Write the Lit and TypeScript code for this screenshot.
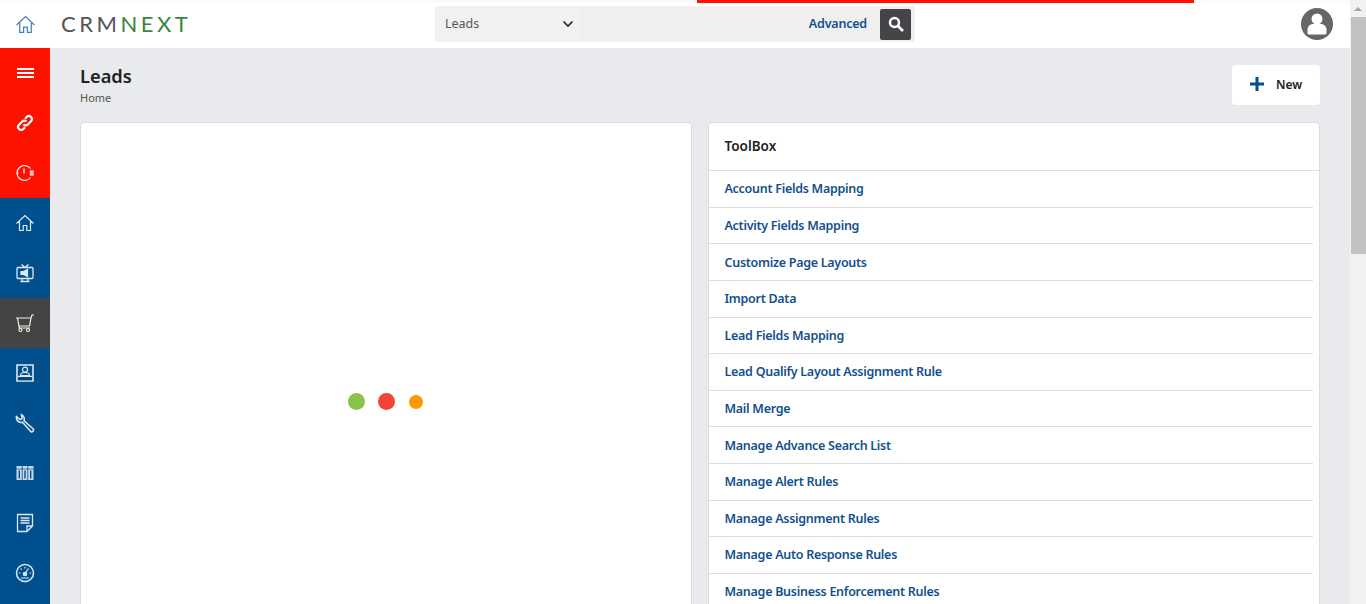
import { LitElement, html, css, svg } from 'lit';
import { customElement } from 'lit/decorators.js';

const ICONS = {
  home: svg`<path d="M1.500 10.500 10 2.500l8.500 8M4.500 8.500v9h3.700v-5h3.600v5h3.700v-9"/>`,
  link: svg`<path d="M8.500 11.500a3 3 0 0 0 4.300 0l3.200-3.200a3 3 0 0 0-4.300-4.300L10 5.700M11.500 8.500a3 3 0 0 0-4.300 0L4 11.700A3 3 0 0 0 8.300 16L10 14.300" stroke-width="2.100"/>`,
  clock: svg`<path d="M15.500 5.500A7.500 7.500 0 1 0 15.500 14.500M9 5.500v5M2.500 10h1"/><path d="M15 7.500h3.500v5H15z" fill="currentColor" stroke-width="0.500" opacity="0.700"/>`,
  tv: svg`<path d="M6.500 1.500l3.500 3 3.500-3M3 4.500h14a1 1 0 0 1 1 1v9a1 1 0 0 1-1 1H3a1 1 0 0 1-1-1v-9a1 1 0 0 1 1-1zM5.500 18.500h9" stroke-width="1.300"/><path d="M6 8.500h2.500l4-2v7l-4-2H6z" fill="currentColor"/><path d="M7 15.500v3M13 15.500v3"/>`,
  cart: svg`<path d="M1 5h14.500M2.500 5l1.500 8h10.500l1.500-8 1-3h2M4.500 13l-.5 2h11"/><circle cx="5.500" cy="17" r="1.500"/><circle cx="13" cy="17" r="1.500"/>`,
  contact: svg`<path d="M2 2h16v16H2z" stroke-width="1.600"/><circle cx="10" cy="6.700" r="2.500"/><path d="M5.500 12.500c0-2 2-3 4.500-3s4.500 1 4.500 3z"/><path d="M3 13.500h14" stroke-width="1.400"/><path d="M3 14.200h14v3H3z" fill="#0b3f78" stroke="none"/>`,
  wrench: svg`<path d="M1.500 3.500 5 6.500l2.200-1L6.500 1.800a4.800 4.800 0 0 1 2.500 6l9 8a1.700 1.700 0 0 1-2.500 2.500l-8-9a4.800 4.800 0 0 1-6-5.800z" stroke-width="1.500"/>`,
  columns: svg`<path d="M1.500 3h17v14h-17z" fill="#c5dcf0" stroke="none"/><path d="M7.200 3v14M12.800 3v14" stroke="#024f8e" stroke-width="0.800"/><path d="M1.500 6h17" stroke="#024f8e" stroke-width="0.700"/><path d="M4.300 7.500v8M10 7.500v8M15.700 7.500v8" stroke="#0b3f78" stroke-width="1.300"/>`,
  note: svg`<path d="M17.500 13V1.500h-15v17H12zM17.500 13H12v5.500M5.500 5h9M5.500 7.500h9M5.500 10h9" stroke-width="1.300"/>`,
  gauge: svg`<circle cx="10" cy="10" r="8.500" stroke-width="1.500"/><path d="M10 10.500l3.500-5M6 15h8M3.800 10h1.700M14.500 10h1.700M10 4v1.500M5.600 5.600l1.100 1.100"/><circle cx="10" cy="11" r="1.700" fill="currentColor"/>`,
};

type IconName = keyof typeof ICONS;

const TOOLS = [
  'Account Fields Mapping',
  'Activity Fields Mapping',
  'Customize Page Layouts',
  'Import Data',
  'Lead Fields Mapping',
  'Lead Qualify Layout Assignment Rule',
  'Mail Merge',
  'Manage Advance Search List',
  'Manage Alert Rules',
  'Manage Assignment Rules',
  'Manage Auto Response Rules',
  'Manage Business Enforcement Rules',
];

const NAV: { icon: IconName; tone: string }[] = [
  { icon: 'link', tone: 'red' },
  { icon: 'clock', tone: 'red' },
  { icon: 'home', tone: 'blue' },
  { icon: 'tv', tone: 'blue' },
  { icon: 'cart', tone: 'dark' },
  { icon: 'contact', tone: 'blue' },
  { icon: 'wrench', tone: 'blue' },
  { icon: 'columns', tone: 'blue' },
  { icon: 'note', tone: 'blue' },
  { icon: 'gauge', tone: 'blue' },
];

@customElement('app-root')
export class AppRoot extends LitElement {
  static styles = css`
    :host {
      display: flex;
      width: 1366px;
      height: 604px;
      overflow: hidden;
      font-family: "Noto Sans", "Open Sans", sans-serif;
      background: #e8eaed;
    }
    .page {
      width: 1350px;
      display: flex;
      flex-direction: column;
      position: relative;
    }
    .topline {
      position: absolute;
      left: 0;
      right: 0;
      top: 0;
      height: 3px;
      background: #fafafa;
    }
    .progress {
      position: absolute;
      left: 697px;
      top: 0;
      width: 497px;
      height: 3px;
      background: #ff1100;
    }
    header {
      height: 48px;
      background: #fff;
      display: flex;
      align-items: center;
      flex: none;
    }
    .home-btn {
      width: 50px;
      display: flex;
      justify-content: center;
      color: #4a7fb5;
    }
    .home-btn svg {
      width: 21px;
      height: 21px;
      fill: none;
      stroke: currentColor;
      stroke-width: 1.200;
    }
    .logo {
      margin-left: 11px;
      width: 374px;
      font-family: "Lato", sans-serif;
      font-size: 22px;
      letter-spacing: 3.500px;
      color: #555;
      padding-bottom: 1px;
    }
    .logo span {
      color: #3d8542;
    }
    .search {
      width: 480px;
      height: 36px;
      border-radius: 4px;
      background: #efefef;
      display: flex;
      align-items: center;
    }
    .select {
      width: 146px;
      height: 33px;
      padding: 0 7px 1px 10px;
      box-sizing: border-box;
      background: #f1f1f1;
      border-radius: 4px;
      display: flex;
      align-items: center;
      justify-content: space-between;
      font-size: 12.500px;
      color: #555;
    }
    .select svg {
      width: 12px;
      height: 8px;
      fill: none;
      stroke: #222;
      stroke-width: 1.600;
    }
    .adv {
      margin-left: auto;
      margin-right: 13px;
      padding-bottom: 1px;
      font-size: 12.500px;
      font-weight: 600;
      letter-spacing: -0.200px;
      color: #14508e;
    }
    .go {
      width: 31px;
      height: 31px;
      margin-right: 4px;
      border-radius: 2px;
      background: #444449;
      display: flex;
      align-items: center;
      justify-content: center;
    }
    .go svg {
      width: 16px;
      height: 16px;
      fill: none;
      stroke: #fff;
      stroke-width: 2.500;
    }
    .avatar {
      margin-left: auto;
      margin-right: 17px;
      width: 32px;
      height: 32px;
    }
    .below {
      flex: 1;
      min-height: 0;
      display: flex;
    }
    nav {
      width: 50px;
      flex: none;
      display: flex;
      flex-direction: column;
      background: #024f8e;
    }
    .nav-item {
      height: 50px;
      flex: none;
      display: flex;
      align-items: center;
      justify-content: center;
      color: #fff;
    }
    .nav-item svg {
      width: 20px;
      height: 20px;
      fill: none;
      stroke: currentColor;
      stroke-width: 1.200;
    }
    .red { background: #ff1100; }
    .blue { background: #024f8e; color: #dce9f5; }
    .dark { background: #444444; color: #f2ede4; }
    .burger {
      display: flex;
      flex-direction: column;
      gap: 2px;
    }
    .burger i {
      display: block;
      width: 17px;
      height: 2px;
      background: #fff;
    }
    main {
      flex: 1;
      min-width: 0;
      padding: 17px 30px 0;
    }
    .head {
      display: flex;
      justify-content: space-between;
      align-items: flex-start;
      height: 58px;
      margin-bottom: -1px;
    }
    h1 {
      margin: -1px 0 0;
      font-size: 18.300px;
      line-height: 24px;
      font-weight: 600;
      color: #222;
    }
    .crumb {
      font-size: 11px;
      line-height: 20px;
      color: #555;
    }
    .new {
      width: 88px;
      height: 40px;
      padding-bottom: 2px;
      box-sizing: border-box;
      background: #fff;
      border-radius: 4px;
      display: flex;
      align-items: center;
      font-size: 12px;
      font-weight: 600;
      color: #222;
    }
    .new svg {
      width: 14px;
      height: 14px;
      margin-left: 18px;
      margin-right: 12px;
      fill: #024f8e;
    }
    .cols {
      display: grid;
      grid-template-columns: 612px 612px;
      gap: 16px;
    }
    .card {
      height: 520px;
      background: #fff;
      border: 1px solid #dcdcdc;
      border-radius: 4px;
      box-sizing: border-box;
    }
    .loader {
      display: grid;
      grid-template-columns: repeat(3, 30px);
      justify-content: center;
      justify-items: center;
      align-items: center;
      padding-top: 270px;
    }
    .dot { border-radius: 50%; }
    .d1 { width: 17px; height: 17px; background: #8bc34a; }
    .d2 { width: 17px; height: 17px; background: #f44336; }
    .d3 { width: 14px; height: 14px; background: #ff9800; }
    .tool-head {
      height: 48.200px;
      padding: 0 0 2px 15.500px;
      display: flex;
      align-items: center;
      font-size: 13.500px;
      font-weight: 600;
      color: #222;
      border-bottom: 1px solid #dedede;
      box-sizing: border-box;
    }
    .tool-row {
      height: 36.600px;
      margin-right: 6px;
      padding-left: 15.500px;
      display: flex;
      align-items: center;
      box-sizing: border-box;
      border-bottom: 1px solid #dedede;
      font-size: 12.500px;
      letter-spacing: -0.280px;
      font-weight: 600;
      color: #14508e;
    }
    .scrollbar {
      width: 16px;
      flex: none;
      background: #f1f1f1;
      display: flex;
      flex-direction: column;
      align-items: center;
    }
    .arrow {
      height: 17px;
      display: flex;
      align-items: center;
    }
    .arrow svg {
      width: 8px;
      height: 4px;
      fill: #a3a3a3;
    }
    .thumb {
      width: 15px;
      margin-left: 1px;
      height: 237px;
      background: #c1c1c1;
    }
  `;

  private icon(name: IconName) {
    return html`<svg viewBox="0 0 20 20">${ICONS[name]}</svg>`;
  }

  render() {
    return html`
      <div class="page">
        <header>
          <div class="home-btn">${this.icon('home')}</div>
          <div class="logo">CRM<span>NEXT</span></div>
          <div class="search">
            <div class="select">
              Leads
              <svg viewBox="0 0 12 8"><path d="M1.500 1.500 6 6l4.500-4.500" /></svg>
            </div>
            <div class="adv">Advanced</div>
            <div class="go">
              <svg viewBox="0 0 16 16"><circle cx="6.500" cy="6.500" r="4.500" /><path d="m10 10 5 5" /></svg>
            </div>
          </div>
          <svg class="avatar" viewBox="0 0 32 32">
            <circle cx="16" cy="16" r="16" fill="#666" />
            <circle cx="16" cy="11" r="5.500" fill="#fff" />
            <path d="M6.500 25v-3c0-4 3-6 5.500-6h8c2.500 0 5.500 2 5.500 6v3c0 1-1 1.500-2 1.500H8.500c-1 0-2-.5-2-1.500z" fill="#fff" />
          </svg>
        </header>
        <div class="topline"></div>
        <div class="progress"></div>
        <div class="below">
          <nav>
            <div class="nav-item red">
              <div class="burger"><i></i><i></i><i></i></div>
            </div>
            ${NAV.map(
              (n) => html`<div class="nav-item ${n.tone}">${this.icon(n.icon)}</div>`,
            )}
          </nav>
          <main>
            <div class="head">
              <div>
                <h1>Leads</h1>
                <div class="crumb">Home</div>
              </div>
              <div class="new">
                <svg viewBox="0 0 14 14"><path d="M5.500 0h3v5.500H14v3H8.500V14h-3V8.500H0v-3h5.500z" /></svg>
                New
              </div>
            </div>
            <div class="cols">
              <div class="card">
                <div class="loader">
                  <div class="dot d1"></div>
                  <div class="dot d2"></div>
                  <div class="dot d3"></div>
                </div>
              </div>
              <div class="card">
                <div class="tool-head">ToolBox</div>
                ${TOOLS.map((t) => html`<div class="tool-row">${t}</div>`)}
              </div>
            </div>
          </main>
        </div>
      </div>
      <div class="scrollbar">
        <div class="arrow"><svg viewBox="0 0 8 4"><path d="M4 0l4 4H0z" /></svg></div>
        <div class="thumb"></div>
      </div>
    `;
  }
}
